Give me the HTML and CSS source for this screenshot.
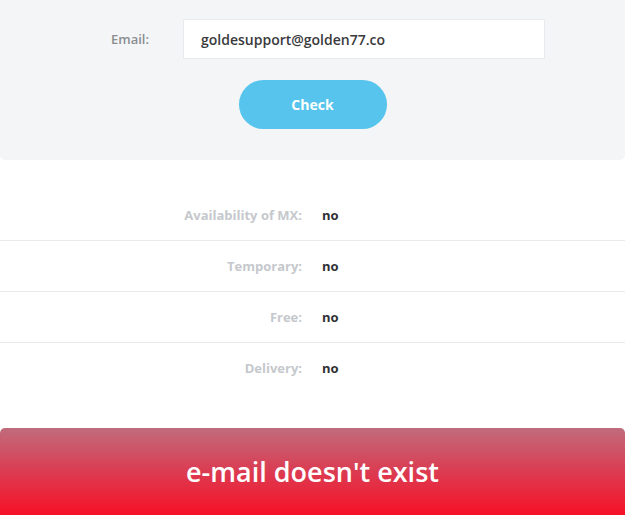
FILE: index.html
```html
<!DOCTYPE html>
<html lang="en">
<head>
    <meta charset="UTF-8">
    <meta name="viewport" content="width=device-width, initial-scale=1.0">
    <title>Email checker</title>
    <link rel="stylesheet" href="styles.css">
</head>
<body>
    <div class="wrap">
        <div class="check-panel">
            <div class="form-row">
                <label class="form-label" for="emailInput">Email:</label>
                <input type="text" id="emailInput" class="email-input" value="goldesupport@golden77.co">
            </div>
            <button class="check-button">Check</button>
        </div>

        <div class="results">
            <div class="result-row">
                <span class="result-label">Availability of MX:</span>
                <span class="result-value">no</span>
            </div>
            <div class="result-row">
                <span class="result-label">Temporary:</span>
                <span class="result-value">no</span>
            </div>
            <div class="result-row">
                <span class="result-label">Free:</span>
                <span class="result-value">no</span>
            </div>
            <div class="result-row">
                <span class="result-label">Delivery:</span>
                <span class="result-value">no</span>
            </div>
        </div>

        <div class="status-banner">e-mail doesn't exist</div>
    </div>
</body>
</html>
```

FILE: styles.css
```css
body {
    font-family: 'Open Sans', 'Liberation Sans', sans-serif;
    background-color: #fff;
    margin: 0;
    padding: 0;
    overflow: hidden;
}
.wrap {
    width: 625px;
}
.check-panel {
    background-color: #f4f5f7;
    height: 160px;
    box-sizing: border-box;
    padding-top: 19px;
    border-radius: 0 0 5px 5px;
    display: flex;
    flex-direction: column;
    align-items: center;
}
.form-row {
    display: flex;
    align-items: center;
    width: 100%;
}
.form-label {
    width: 149px;
    margin-right: 34px;
    text-align: right;
    font-size: 13px;
    font-weight: 600;
    color: #8b8d90;
}
.email-input {
    width: 362px;
    height: 40px;
    box-sizing: border-box;
    border: 1px solid #e8eaed;
    background: #fff;
    padding: 0 17px;
    font-family: inherit;
    font-size: 14px;
    font-weight: 600;
    color: #3a3a3d;
    outline: none;
}
.check-button {
    margin-top: 21px;
    width: 148px;
    height: 49px;
    border: none;
    border-radius: 25px;
    background-color: #56c4ec;
    color: #fff;
    font-family: inherit;
    font-size: 14px;
    font-weight: 700;
    cursor: pointer;
}
.results {
    margin-top: 30px;
}
.result-row {
    display: flex;
    align-items: center;
    height: 50px;
    border-bottom: 1px solid #e9eaec;
}
.result-row:last-child {
    border-bottom: none;
}
.result-label {
    width: 302px;
    margin-right: 20px;
    text-align: right;
    font-size: 13px;
    font-weight: 700;
    color: #c5c8cc;
}
.result-value {
    font-size: 13px;
    font-weight: 700;
    color: #2f3036;
}
.status-banner {
    margin-top: 35px;
    height: 100px;
    box-sizing: border-box;
    padding-top: 29px;
    line-height: 30px;
    border-radius: 5px 5px 0 0;
    background: linear-gradient(to bottom, #c06c7c 0%, #dc3a50 45%, #ff0419 100%);
    color: #fff;
    text-align: center;
    font-size: 27px;
    font-weight: 600;
}
```
